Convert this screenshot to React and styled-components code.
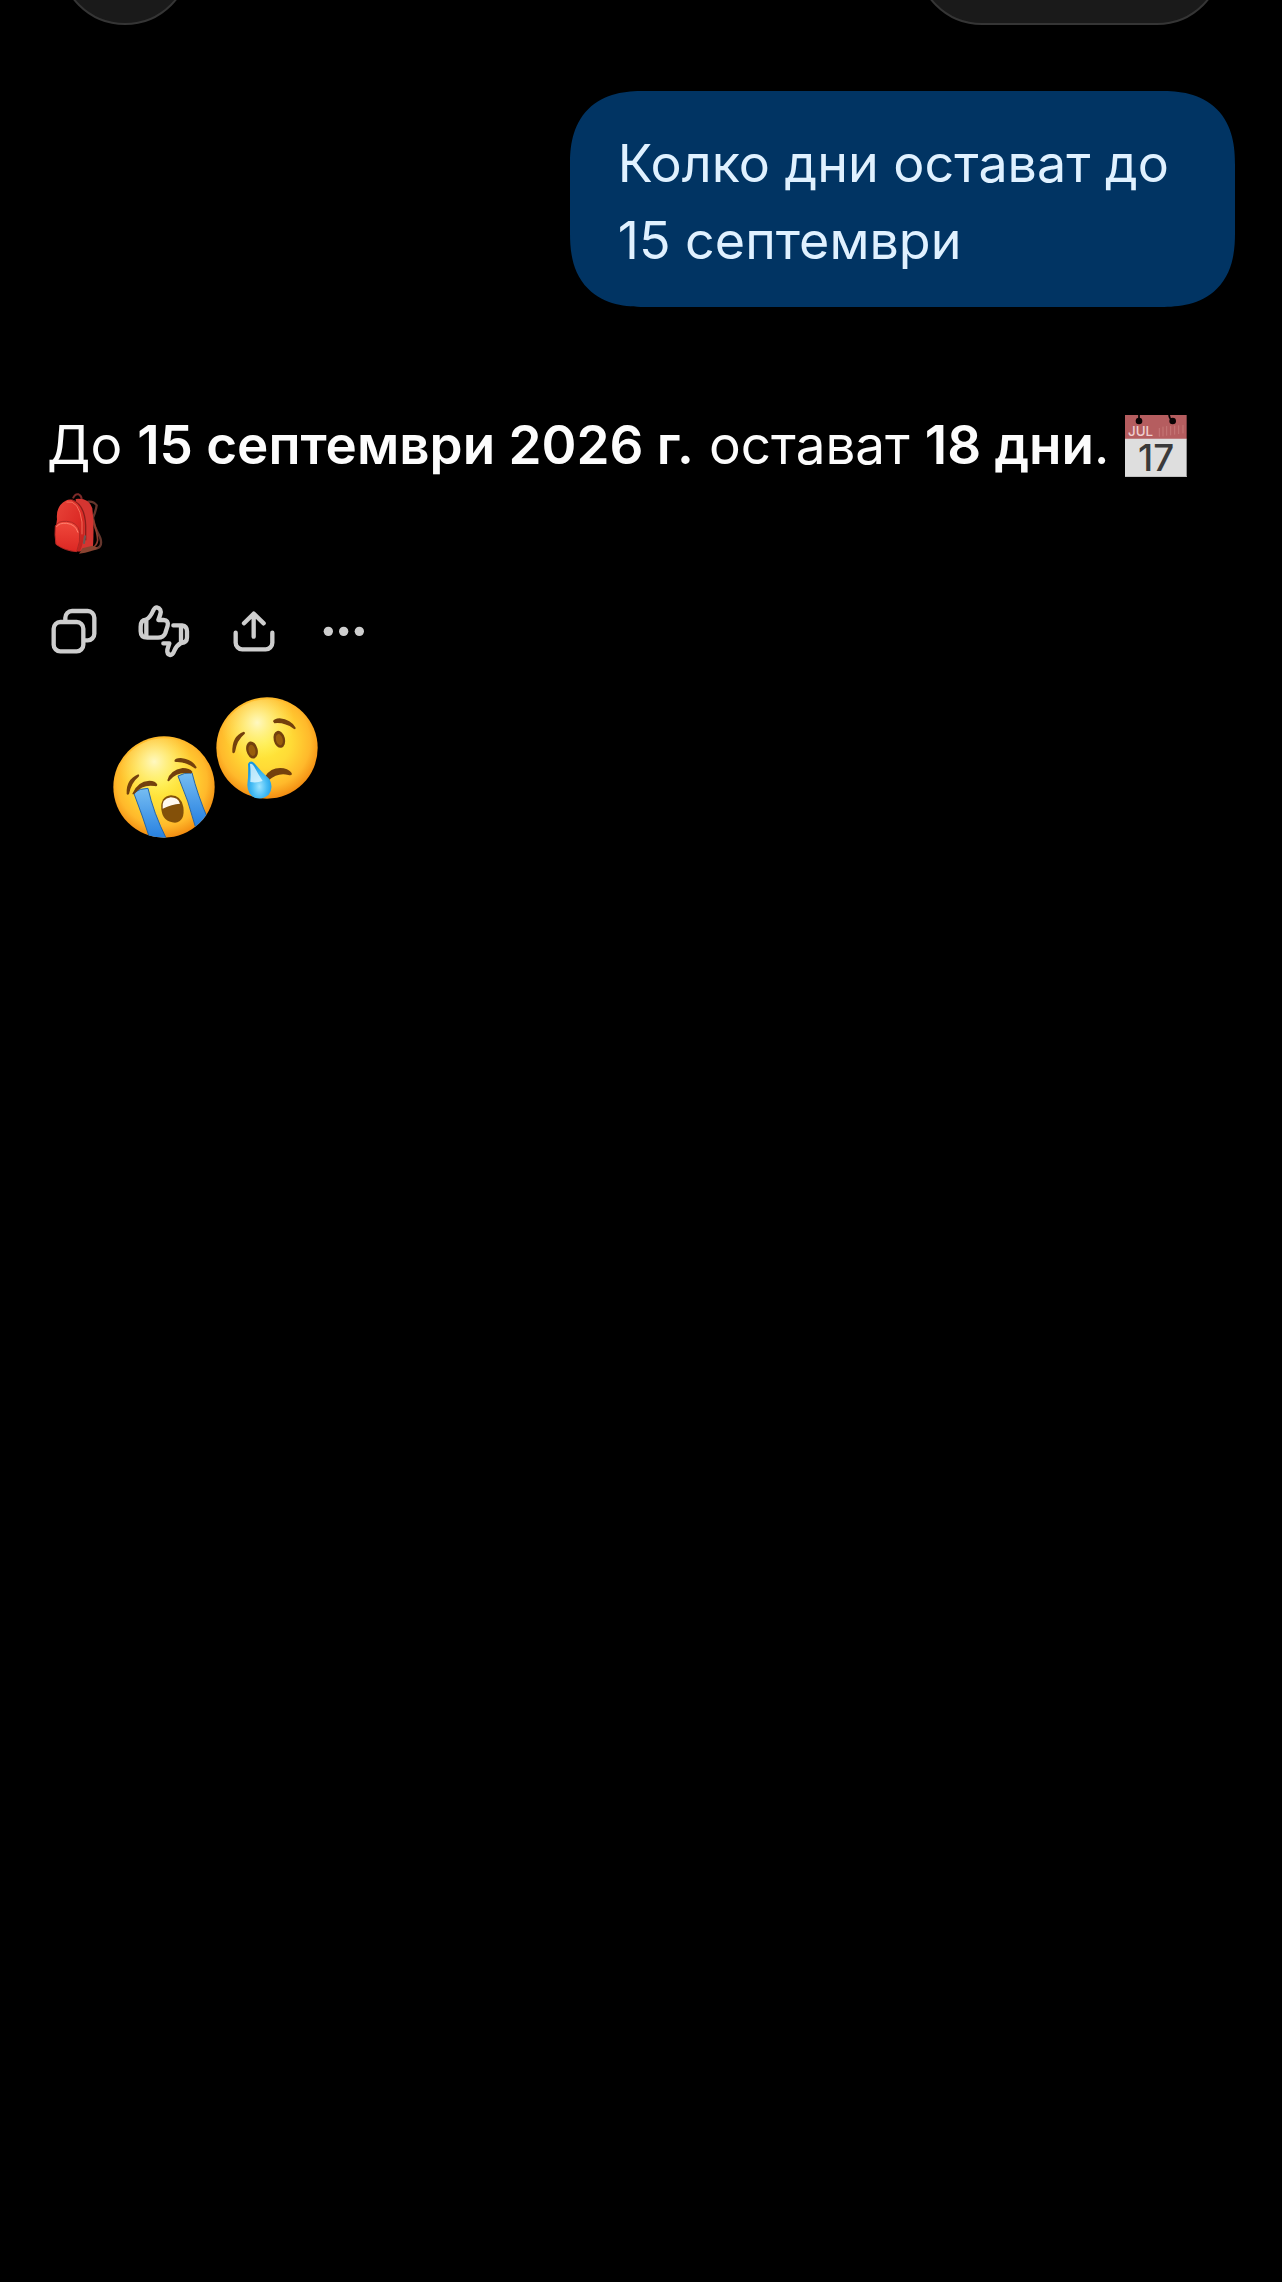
import React from "react";
import styled, { createGlobalStyle } from "styled-components";

const GlobalStyle = createGlobalStyle`
  *, *::before, *::after { box-sizing: border-box; }
  body {
    margin: 0;
    background: #000;
    color: #fcfcfc;
    font-family: Inter, "Noto Sans", sans-serif;
    font-size: 53px;
    line-height: 77px;
  }
`;

const Screen = styled.div`
  display: flex;
  flex-direction: column;
  min-height: 100vh;
  overflow: hidden;
`;

const TopBar = styled.header`
  display: flex;
  justify-content: space-between;
  padding: 0 59px;
  margin-top: -107px;
`;

const GlassButton = styled.button`
  width: ${(p) => (p.$wide ? "307px" : "132px")};
  height: 132px;
  padding: 0;
  border: 2px solid #353535;
  border-radius: 66px;
  background: #1a1a1a;
`;

const Conversation = styled.main`
  display: flex;
  flex-direction: column;
  padding: 66px 47px;
`;

const UserMessage = styled.p`
  align-self: flex-end;
  max-width: 56%;
  margin: 0;
  padding: 34px 48px 28px;
  border-radius: 64px;
  background: #013463;
  color: #e0f1ff;
  font-size: 52px;

  @supports (corner-shape: superellipse(1.3)) {
    border-radius: 74px;
    corner-shape: superellipse(1.3);
  }
`;

const Reply = styled.p`
  margin: 100px 0 0;

  strong { font-weight: 600; }
`;

const InlineEmoji = styled.svg`
  width: 64px;
  height: 64px;
  overflow: visible;
  vertical-align: -14px;
`;

const CalendarText = styled.text`
  font-weight: 500;
  line-height: 1;
`;

const Actions = styled.div`
  display: flex;
  gap: 36px;
  margin-top: 43px;
`;

const ActionButton = styled.button`
  width: 54px;
  height: 54px;
  padding: 0;
  border: 0;
  background: none;
  color: #cecece;

  svg {
    display: block;
    width: 54px;
    height: 54px;
    fill: none;
    stroke: currentColor;
    stroke-width: 13;
    stroke-linecap: round;
    stroke-linejoin: round;
  }
`;

const Reactions = styled.div`
  display: flex;
  gap: 1px;
  height: 141px;
  margin-top: 39px;
  padding-left: 66px;
`;

const Face = styled.svg`
  width: 102px;
  height: 102px;
  align-self: ${(p) => (p.$low ? "flex-end" : "flex-start")};
`;

function Calendar() {
  return (
    <InlineEmoji viewBox="126 68 192 192" role="img" aria-label="Календар">
      <path d="M129 71H314V144H129Z" fill="#b55d5f" />
      <path d="M129 142H314V257H129Z" fill="#dedede" />
      <path d="M129 254H314V257H129Z" fill="#c2c2c2" />
      <path d="M232 110V136M243 106V135M254 104V133M266 104V132M278 103V130M290 102V128M303 101V126" stroke="#c67877" strokeWidth="3" />
      <path d="M171 70V88M261 70Q262 82 271 88" stroke="#000" strokeWidth="5" fill="none" />
      <circle cx="171" cy="89" r="10" fill="#080203" />
      <circle cx="272" cy="89" r="10" fill="#080203" />
      <CalendarText x="138" y="134" fontSize="40" fill="#efcfcf">JUL</CalendarText>
      <CalendarText x="222" y="238" textAnchor="middle" fontSize="110" fill="#3a3a3a">17</CalendarText>
    </InlineEmoji>
  );
}

function Backpack() {
  return (
    <InlineEmoji viewBox="54 300 192 192" role="img" aria-label="Раница">
      <defs>
        <linearGradient id="bag" x1="0" y1="0" x2="1" y2="1">
          <stop offset="0" stopColor="#e9453a" />
          <stop offset="0.6" stopColor="#dc2b26" />
          <stop offset="1" stopColor="#b81f1c" />
        </linearGradient>
        <linearGradient id="pocket" x1="0" y1="0" x2="0" y2="1">
          <stop offset="0" stopColor="#f0493c" />
          <stop offset="1" stopColor="#dc2723" />
        </linearGradient>
      </defs>
      <path d="M132 322Q138 307 149 310Q158 314 158 326" stroke="#7c2a29" strokeWidth="6" fill="none" />
      <path d="M176 332Q194 330 203 343Q200 362 192 380Q194 404 206 425Q222 452 213 466Q206 475 190 474" stroke="#64352c" strokeWidth="7" fill="none" />
      <path d="M192 385Q205 425 206 447Q204 464 190 470" stroke="#8e3c2e" strokeWidth="5" fill="none" />
      <path d="M140 324Q180 320 190 352Q196 400 192 468Q172 482 146 480Z" fill="#d43531" />
      <path d="M160 472L190 464L208 470Q190 482 150 488Z" fill="#8a4431" />
      <path d="M84 385Q80 345 110 329Q132 319 150 340Q166 358 166 400Q168 450 152 482Q110 480 81 460Q76 430 84 385Z" fill="url(#bag)" />
      <path d="M130 327Q168 342 170 405V448" stroke="#8a1d1a" strokeWidth="4" fill="none" />
      <path d="M112 333Q150 325 159 393V430" stroke="#f46d59" strokeWidth="3" fill="none" />
      <path d="M79 405Q88 389 113 391Q145 393 152 423Q155 452 143 482Q108 480 81 460Q76 430 79 405Z" fill="url(#pocket)" stroke="#b02622" strokeWidth="3" />
      <path d="M82 408Q90 395 113 397Q140 400 147 425" stroke="#ff806d" strokeWidth="3" fill="none" />
      <path d="M168 436L165 456" stroke="#6d5955" strokeWidth="6" strokeLinecap="round" />
    </InlineEmoji>
  );
}

function FaceGradients({ id }) {
  return (
    <defs>
      <radialGradient id={`${id}-skin`} cx="0.48" cy="0.44" r="0.57">
        <stop offset="0" stopColor="#ffee3c" />
        <stop offset="0.45" stopColor="#ffdb36" />
        <stop offset="0.78" stopColor="#ffb92b" />
        <stop offset="1" stopColor="#f28a10" />
      </radialGradient>
      <radialGradient id={`${id}-shine`} cx="0.4" cy="0.24" r="0.38">
        <stop offset="0" stopColor="#fffbd0" stopOpacity="0.9" />
        <stop offset="1" stopColor="#fff27a" stopOpacity="0" />
      </radialGradient>
      <linearGradient id={`${id}-tear`} x1="0" y1="0" x2="0" y2="1">
        <stop offset="0" stopColor="#76bdf2" />
        <stop offset="1" stopColor="#257fe0" />
      </linearGradient>
      <radialGradient id={`${id}-drop`} cx="0.5" cy="0.68" r="0.6">
        <stop offset="0" stopColor="#9de4ff" />
        <stop offset="0.5" stopColor="#48bdf5" />
        <stop offset="1" stopColor="#1597e2" />
      </radialGradient>
    </defs>
  );
}

function SobbingFace() {
  return (
    <Face $low viewBox="39 170 306 306" role="img" aria-label="Ридаещо лице">
      <FaceGradients id="sob" />
      <clipPath id="sob-clip"><circle cx="192" cy="323" r="152" /></clipPath>
      <circle cx="192" cy="323" r="152" fill="url(#sob-skin)" />
      <circle cx="192" cy="323" r="146" fill="url(#sob-shine)" />
      <g clipPath="url(#sob-clip)" stroke="#2466a9" strokeWidth="3" fill="url(#sob-tear)">
        <path d="M101 340Q120 327 144 327Q160 400 200 480H150Q128 410 101 340Z" />
        <path d="M234 290Q252 280 276 280Q292 345 324 420L286 442Q266 365 234 290Z" />
      </g>
      <g fill="#73400d">
        <path d="M80 344Q77 301 115 285Q120 288 116 292Q94 309 87 344Q83 348 80 344Z" />
        <path d="M223 246Q224 236 242 236Q278 240 290 264Q288 270 283 266Q254 246 227 248Z" />
        <path d="M97 343Q112 306 148 304Q167 304 172 316Q171 322 164 320Q128 314 106 341Q100 348 97 343Z" />
        <path d="M202 303Q210 272 248 266Q269 266 277 277Q277 284 269 282Q232 276 210 302Q205 309 202 303Z" />
        <path d="M184 390Q181 351 213 348Q243 348 250 383Q256 426 225 430Q188 429 184 390Z" fill="#835009" />
      </g>
      <path d="M188 388Q184 358 212 354Q234 354 240 373Q216 375 188 388Z" fill="#fff9f0" />
    </Face>
  );
}

function CryingFace() {
  return (
    <Face viewBox="349 49 306 306" role="img" aria-label="Плачещо лице">
      <FaceGradients id="cry" />
      <circle cx="502" cy="202" r="152" fill="url(#cry-skin)" />
      <circle cx="502" cy="202" r="146" fill="url(#cry-shine)" />
      <g fill="#73400d">
        <path d="M398 215Q396 166 432 153Q439 155 434 161Q412 178 406 214Q401 221 398 215Z" />
        <path d="M520 122Q523 114 540 113Q574 117 588 141Q588 148 582 144Q553 124 524 128Z" />
        <ellipse cx="457" cy="208" rx="17" ry="26" transform="rotate(-14 457 208)" />
        <ellipse cx="539" cy="176" rx="17" ry="26" transform="rotate(-14 539 176)" />
        <path d="M497 287Q515 258 552 263Q574 269 577 280Q575 286 566 283Q534 275 507 299Z" />
      </g>
      <g fill="#985e0c">
        <ellipse cx="457" cy="209" rx="10" ry="17" transform="rotate(-14 457 209)" />
        <ellipse cx="539" cy="177" rx="10" ry="17" transform="rotate(-14 539 177)" />
      </g>
      <path d="M449 244Q457 239 464 248Q487 276 509 295Q523 321 507 342Q489 358 465 351Q444 341 443 313Q447 280 445 250Z" fill="url(#cry-drop)" />
      <path d="M451 250Q458 247 463 257Q475 280 489 301Q470 308 452 304Q454 276 451 250Z" fill="#e2f8ff" opacity="0.8" />
    </Face>
  );
}

export default function App() {
  return (
    <Screen lang="bg">
      <GlobalStyle />
      <TopBar>
        <GlassButton type="button" aria-label="Меню" />
        <GlassButton type="button" $wide aria-label="Опции на разговора" />
      </TopBar>
      <Conversation>
        <UserMessage>Колко дни остават до 15 септември</UserMessage>
        <Reply>
          До <strong>15 септември 2026 г.</strong> остават <strong>18 дни</strong>. <Calendar /> <Backpack />
        </Reply>
        <Actions>
          <ActionButton type="button" aria-label="Копиране">
            <svg viewBox="21 42 162 162">
              <rect x="41" y="96" width="89" height="88" rx="20" />
              <path d="M76 90V83a20 20 0 0 1 20-20H143a20 20 0 0 1 20 20V131a20 20 0 0 1-20 20H136" />
            </svg>
          </ActionButton>
          <ActionButton type="button" aria-label="Оценка">
            <svg viewBox="291 42 162 162">
              <path d="M318 89Q302 90 302 110V124Q302 143 322 143H354Q371 143 376 129L383 107Q386 91 371 90H355L361 73Q366 56 350 52Q344 52 339 63Q331 82 318 89ZM319 89V142" />
              <path d="M400 106H426Q441 108 441 124V142Q441 158 424 159M423 108V159M370 160H388L382 179Q380 193 391 195Q398 195 403 182Q410 166 423 159" />
            </svg>
          </ActionButton>
          <ActionButton type="button" aria-label="Споделяне">
            <svg viewBox="561 42 162 162">
              <path d="M641 140V72M612 100L641 71L671 100M587 128V158a20 20 0 0 0 20 20H677a20 20 0 0 0 20-20V128" />
            </svg>
          </ActionButton>
          <ActionButton type="button" aria-label="Още">
            <svg viewBox="831 42 162 162">
              <g fill="currentColor" stroke="none">
                <circle cx="865" cy="124" r="14" />
                <circle cx="911" cy="124" r="14" />
                <circle cx="958" cy="124" r="14" />
              </g>
            </svg>
          </ActionButton>
        </Actions>
        <Reactions>
          <SobbingFace />
          <CryingFace />
        </Reactions>
      </Conversation>
    </Screen>
  );
}
